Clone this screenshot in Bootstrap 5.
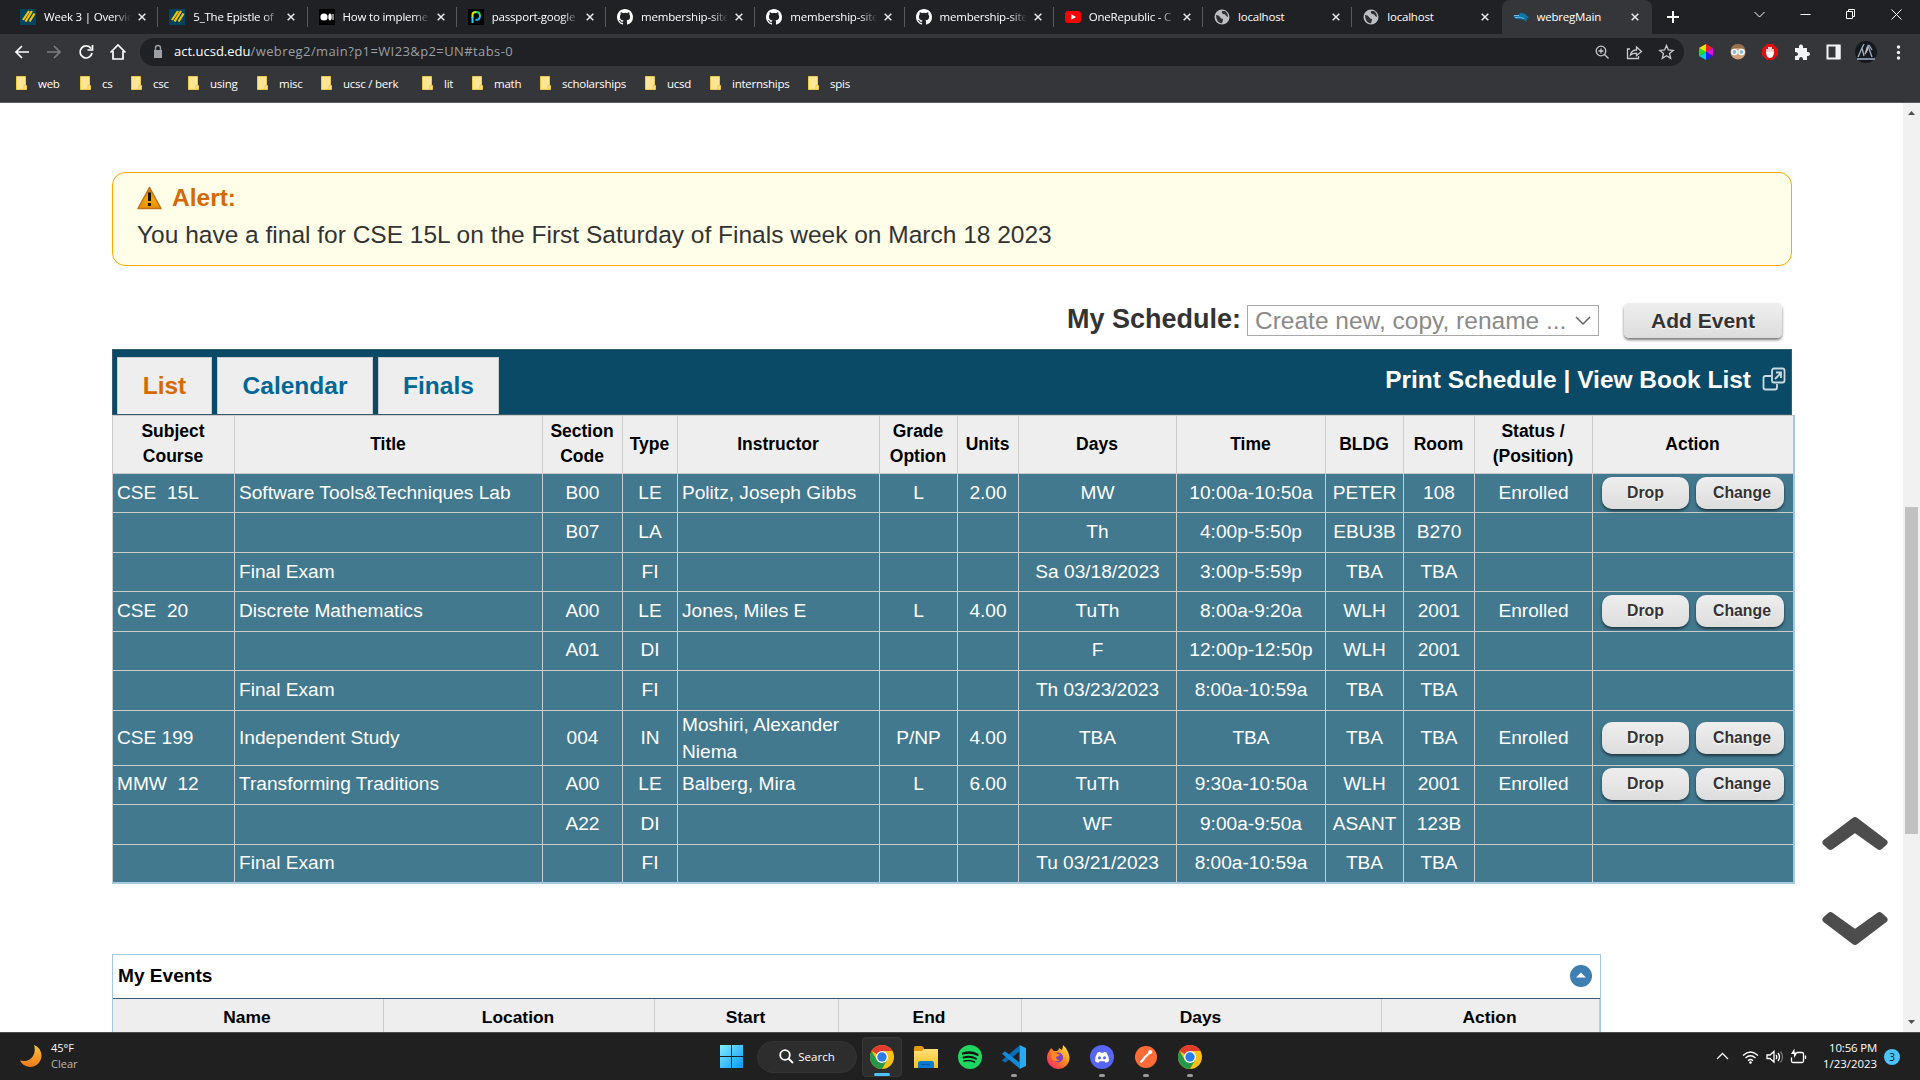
<!DOCTYPE html>
<html lang="en">
<head>
<meta charset="utf-8">
<title>webregMain</title>
<link href="https://cdn.jsdelivr.net/npm/bootstrap@5.3.0/dist/css/bootstrap.min.css" rel="stylesheet">
<style>
html,body{width:1920px;height:1080px;overflow:hidden}
body{font-family:"Liberation Sans",Arial,sans-serif;color:#000;background:#fff}
svg{display:block;flex:none}
.ui{font-family:"Open Sans","Noto Sans",sans-serif;color:#fff;font-size:11.5px}
/* browser chrome */
.tabstrip{height:34px;background:#202124;padding-left:9px}
.btab{width:149.25px;padding:2px 8px 2px 11px;position:relative}
.btab::after{content:"";position:absolute;right:0;top:7px;height:20px;width:1px;background:#5a5b5f}
.btab.nosep::after{display:none}
.btab svg.fav{width:16px;height:16px;margin-right:8px}
.btab .ttl{width:89px;overflow:hidden;white-space:nowrap;letter-spacing:-.2px}
.btab .fade-end{-webkit-mask-image:linear-gradient(90deg,#000 70px,transparent 87px);mask-image:linear-gradient(90deg,#000 70px,transparent 87px)}
.btab .x{margin-left:5px}
.btab.on{background:#35363a;border-radius:8px 8px 0 0;width:150px}
.toolbar{height:34px;background:#35363a;padding:4px 0 2px}
.omni{width:1544px;height:28px;border-radius:14px;background:#202124;font-size:13px}
.urlpath{color:#9aa0a6;letter-spacing:.4px}
.bookmarks{height:35px;background:#35363a;border-bottom:1px solid #5b5c60;display:grid;grid-template-columns:64px 51px 57px 69px 64px 101px 50px 68px 105px 65px 98px 90px;padding-left:16px;padding-bottom:3px;letter-spacing:-.25px}
.bookmarks svg{margin-right:9px}
/* page */
.viewport{height:929px;overflow:hidden}
.main{width:1903px;padding:69px 0 0 112px}
.alertbox{width:1680px;height:94px;border:1px solid #ffa800;border-radius:13px;background:#ffffe9;padding:11px 24px;font-size:24.5px;line-height:28px;color:#333}
.alertbox b{color:#d56a03;margin-left:10px}
.msg{margin-top:9px}
.tools{height:83px;width:1670px;padding-top:25px}
.lbl{font-size:27px;font-weight:700;color:#333;line-height:32px;padding-bottom:2px}
.sel{width:352px;height:31px;border:1px solid #a9a9a9;font-size:24.5px;color:#8a8a8a;padding-left:7px;line-height:29px;margin-left:6px;white-space:nowrap}
.gbtn{background:linear-gradient(#eee,#ddd);border:0;font-weight:700;color:#333;text-shadow:0 1px 2px #fff;box-shadow:0 2px 3px rgba(0,0,0,.55);white-space:nowrap}
.addev{width:158px;height:35px;border-radius:5px;font-size:21px;margin-left:25px;line-height:35px;text-align:center}
.tabbar{width:1680px;height:66px;background:#0b4a66;border:1px solid #3a5a70;padding:7px 5px 0 4px;font-size:24.5px;font-weight:700}
.ptab{height:57px;background:#eee;border:1px solid #ccc;border-bottom:0;line-height:55px;text-align:center;margin-right:5px;color:#016795}
.ptab.sel-on{color:#d56a03}
.plinks{color:#fff;height:47px}
.plinks svg{margin-left:11px}
.sched{width:1683px;table-layout:fixed;border-collapse:collapse;font-size:19.12px;line-height:27px;border:1px solid #a6c9e2;border-width:1px 2px 2px 1px}
.sched th{font-size:17.5px;line-height:25px;background:#eee;border:1px solid #ccc;text-align:center;padding:0 1px 1px 0;height:58px}
.sched td{background:#42798f;color:#fff;border:1px solid #ccc;height:39.45px;padding:0 3px 2px 3px;text-align:center;white-space:nowrap}
.sched tr.tall td{height:55px;padding-bottom:0}
.sched td:nth-child(1),.sched td:nth-child(2),.sched td:nth-child(5){text-align:left;padding-left:4px}
.sched td:nth-child(1){white-space:pre}
.sched td:nth-child(5){white-space:normal}
.acts{gap:7px;padding:1px 0 0 6px}
.sbtn{width:87px;height:32px;border-radius:10px;font-size:15.8px;line-height:32px;text-align:center}
.sbtn.chg{width:88px;padding-left:4px}
.events{width:1489px;margin-top:70px;border:1px solid #a6c9e2;border-bottom:0}
.evhead{height:44px;border-bottom:1px solid #3f5a70;padding:0 8px 2px 5px;font-size:19.1px;font-weight:700}
.evcols{display:grid;grid-template-columns:271px 271px 184px 183px 360px 1fr;font-size:17.4px;font-weight:700;text-align:center;background:#eee;line-height:37px;height:60px}
.evcols div{border-right:1px solid #ccc;padding-right:2px}
.pager{position:absolute;left:1821px;top:815px}
.sbar{width:17px;height:929px;background:#f1f1f1;position:absolute;right:0;top:103px;padding:5px 0}
.thumb{width:13px;height:327px;background:#c1c1c1;margin-top:391px}
/* taskbar */
.taskbar{height:48px;background:#202020;border-top:1px solid #4a4a4a;position:relative;z-index:2}
.wx{width:720px;padding-left:17px;line-height:16px;font-size:11px}
.wxt{padding-bottom:2px}
.wx .cond{color:#b9b9b9}
.pill{width:100px;height:32px;border-radius:16px;background:#2d2d2d;margin:0 5px 0 14px;border:1px solid #343434}
.app{width:40px;height:40px;margin-right:4px;position:relative;border-radius:4px;display:flex;align-items:center;justify-content:center}
.app.cur{background:#2d2d2d;border:1px solid #373737}
.app.run::after{content:"";position:absolute;bottom:0;left:17px;width:6px;height:3px;border-radius:2px;background:#9a9a9a}
.app.cur::after{left:11px;width:16px;background:#4cc2ff}
.clock{line-height:16px;font-size:11.4px;width:62px;margin-left:8px;padding-bottom:2px;white-space:nowrap}
.clock .tm{letter-spacing:-.15px}
.note{width:16px;height:16px;border-radius:50%;background:#4cc2ff;color:#111;font-size:10px;line-height:16px;text-align:center;margin:0 20px 0 7px}
</style>
</head>
<body>
<svg width="0" height="0" class="position-absolute">
<defs>
<linearGradient id="gw" x1="0" y1="0" x2="1" y2="1"><stop offset="0" stop-color="#7ff0ff"/><stop offset="1" stop-color="#0a95fb"/></linearGradient>
<linearGradient id="gf" x1="0" y1="0" x2="0" y2="1"><stop offset="0" stop-color="#ffe07a"/><stop offset="1" stop-color="#fdbf1e"/></linearGradient>
<linearGradient id="gff" x1="1" y1="0" x2="0" y2="1"><stop offset="0" stop-color="#fff34a"/><stop offset=".45" stop-color="#ff8a1e"/><stop offset="1" stop-color="#f0146e"/></linearGradient>
<linearGradient id="gal" x1="0" y1="0" x2="0" y2="1"><stop offset="0" stop-color="#c87414"/><stop offset=".5" stop-color="#f5a800"/><stop offset="1" stop-color="#e88c00"/></linearGradient>
<linearGradient id="gm" x1="0" y1="0" x2="0" y2="1"><stop offset="0" stop-color="#f8c53c"/><stop offset="1" stop-color="#ee7a1a"/></linearGradient>
<symbol id="ucsd" viewBox="0 0 16 16"><path fill="#04445f" d="M0 0h16v16H0z"/><path d="M3 11 9 2M5.500 12.500 12 2M9.500 12.500 14.500 4.500" stroke="#f5c400" stroke-width="2.200"/></symbol>
<symbol id="medium" viewBox="0 0 16 16"><path fill="#000" d="M0 0h16v16H0z"/><circle cx="5" cy="8" r="3.600" fill="#fff"/><ellipse cx="11" cy="8" rx="1.700" ry="3.400" fill="#fff"/><path d="M14 5v6" stroke="#fff"/></symbol>
<symbol id="passp" viewBox="0 0 16 16"><path fill="#000" d="M0 0h16v16H0z"/><path d="M4.500 9V5.500Q4.500 3 8 3" fill="none" stroke="#c5f20a" stroke-width="2"/><path d="M8 3q4 0 4 4" fill="none" stroke="#1ee070" stroke-width="2"/><path d="M12 7q0 4-4.500 4" fill="none" stroke="#18b8f2" stroke-width="2"/><path d="M4.500 8v6" stroke="#35d6e8" stroke-width="2"/></symbol>
<symbol id="gh" viewBox="0 0 16 16"><path fill="#fff" d="M8 0C3.580 0 0 3.580 0 8c0 3.540 2.290 6.530 5.470 7.590.4.070.550-.170.550-.380 0-.190-.010-.820-.010-1.490-2.010.370-2.530-.490-2.690-.940-.090-.230-.480-.940-.820-1.130-.280-.150-.680-.520-.010-.530.630-.010 1.080.580 1.230.820.720 1.210 1.870.870 2.330.660.070-.520.280-.870.510-1.070-1.780-.2-3.640-.890-3.640-3.950 0-.870.310-1.590.820-2.150-.080-.2-.360-1.020.080-2.120 0 0 .670-.210 2.200.820a7.600 7.600 0 0 1 4 0c1.530-1.040 2.200-.820 2.200-.820.440 1.100.160 1.920.080 2.120.510.560.820 1.270.820 2.150 0 3.070-1.870 3.750-3.650 3.950.290.250.540.730.540 1.480 0 1.070-.010 1.930-.010 2.200 0 .210.150.460.550.380A8 8 0 0 0 16 8c0-4.420-3.580-8-8-8z"/></symbol>
<symbol id="yt" viewBox="0 0 16 16"><rect y="2" width="16" height="12" rx="3" fill="#f00"/><path d="M6.300 5.300v5.400L11 8z" fill="#fff"/></symbol>
<symbol id="globe" viewBox="0 0 16 16"><circle cx="8" cy="8" r="7.500" fill="#bdbfc2"/><path d="M2 6q3 0 4 2t3 2q0 3-1.500 4.500Q2 13 2 6M8 2q-1 2 1 3 3 0 3 2l2 1q0-4-3-6z" fill="#303134"/></symbol>
<symbol id="shark" viewBox="0 0 16 16"><path d="M1 6h4l3-2.500L12 5l4 3.500-2 1-1 3.500-2.500-2.500L3 10 0 7.500z" fill="#0b76a8"/><path d="M1 6.500h5M2 8.500q6-1 9 1" stroke="#7fb8d6" fill="none"/></symbol>
<symbol id="cls" viewBox="0 0 8 8"><path d="m.7.7 6.600 6.600m0-6.600L.7 7.300" stroke="#e8eaed" stroke-width="1.500"/></symbol>
<symbol id="fold" viewBox="0 0 13 15"><path d="M.5.500h9v13h-9z" fill="#ffe594" stroke="#eec84b"/><path d="M8 13.500v-4h2.500v4z" fill="#ffe594" stroke="#eec84b"/></symbol>
<symbol id="chrome" viewBox="0 0 24 24"><circle cx="12" cy="12" r="12" fill="#fbc116"/><path d="M12 12 1.600 6A12 12 0 0 1 22.400 6H12z" fill="#e33b2e"/><path d="M1.600 6A12 12 0 0 0 12 24l5.200-9L12 12 6.800 15z" fill="#279847"/><circle cx="12" cy="12" r="6" fill="#fff"/><circle cx="12" cy="12" r="4.700" fill="#2a7de9"/></symbol>
</defs></svg>

<header class="ui">
<div class="tabstrip d-flex">
<div class="btab d-flex align-items-center"><svg class="fav"><use href="#ucsd"/></svg><span class="ttl fade-end">Week 3 | Overvie</span><svg class="x" width="8" height="8"><use href="#cls"/></svg></div>
<div class="btab d-flex align-items-center"><svg class="fav"><use href="#ucsd"/></svg><span class="ttl fade-end">5_The Epistle of</span><svg class="x" width="8" height="8"><use href="#cls"/></svg></div>
<div class="btab d-flex align-items-center"><svg class="fav"><use href="#medium"/></svg><span class="ttl fade-end">How to impleme</span><svg class="x" width="8" height="8"><use href="#cls"/></svg></div>
<div class="btab d-flex align-items-center"><svg class="fav"><use href="#passp"/></svg><span class="ttl fade-end">passport-google</span><svg class="x" width="8" height="8"><use href="#cls"/></svg></div>
<div class="btab d-flex align-items-center"><svg class="fav"><use href="#gh"/></svg><span class="ttl fade-end">membership-site</span><svg class="x" width="8" height="8"><use href="#cls"/></svg></div>
<div class="btab d-flex align-items-center"><svg class="fav"><use href="#gh"/></svg><span class="ttl fade-end">membership-site</span><svg class="x" width="8" height="8"><use href="#cls"/></svg></div>
<div class="btab d-flex align-items-center"><svg class="fav"><use href="#gh"/></svg><span class="ttl fade-end">membership-site</span><svg class="x" width="8" height="8"><use href="#cls"/></svg></div>
<div class="btab d-flex align-items-center"><svg class="fav"><use href="#yt"/></svg><span class="ttl fade-end">OneRepublic - C</span><svg class="x" width="8" height="8"><use href="#cls"/></svg></div>
<div class="btab d-flex align-items-center"><svg class="fav"><use href="#globe"/></svg><span class="ttl">localhost</span><svg class="x" width="8" height="8"><use href="#cls"/></svg></div>
<div class="btab nosep d-flex align-items-center"><svg class="fav"><use href="#globe"/></svg><span class="ttl">localhost</span><svg class="x" width="8" height="8"><use href="#cls"/></svg></div>
<div class="btab on nosep d-flex align-items-center"><svg class="fav"><use href="#shark"/></svg><span class="ttl">webregMain</span><svg class="x" width="8" height="8"><use href="#cls"/></svg></div>
<svg width="268" height="34" viewBox="0 0 268 34" fill="none" stroke="#fff"><path d="M15 17h12m-6-6v12" stroke-width="2"/><path d="m102.500 12 5 5 5-5M148.500 14.500h10M194.500 11.500h6v7h-6zM196.500 11v-1.500h6v7h-2M239.500 9.500l10 10m0-10-10 10"/></svg>
</div>
<div class="toolbar d-flex align-items-center">
<svg width="140" height="28" viewBox="0 0 140 28" fill="none" stroke="#fff" stroke-width="1.700"><path d="M29 14H16m6-6-6 6 6 6"/><path d="M47 14h13m-6-6 6 6-6 6" stroke="#7c7d80"/><path d="M91 10.500a6 6 0 1 0 1 4.500M92.500 7v5h-5"/><path d="M110.500 14.500 118 7l7.500 7.500M113 13v8h10v-8"/></svg>
<div class="omni d-flex align-items-center">
<svg width="34" height="28" viewBox="0 0 34 28"><path d="M14 12h8v8h-8z" fill="#9aa0a6"/><path d="M15.500 12v-2a2.500 2.500 0 0 1 5 0v2" fill="none" stroke="#9aa0a6" stroke-width="1.400"/></svg>
<span class="flex-grow-1 pt-1 pb-1">act.ucsd.edu<span class="urlpath">/webreg2/main?p1=WI23&amp;p2=UN#tabs-0</span></span>
<svg width="97" height="28" viewBox="0 0 97 28" fill="none" stroke="#c8cacd" stroke-width="1.300"><circle cx="14" cy="13" r="4.800"/><path d="m17.500 16.500 4 4M14 10.500v5M11.500 13h5M43 11h-2.500v9.500h11V18M43.500 17q1-5 6-5V9l5 4.500-5 4.200v-2.500q-4 0-6 1.800z"/><path d="m79.500 7.500 1.900 4.500 4.800.4-3.700 3.100 1.200 4.800-4.200-2.600-4.200 2.600 1.200-4.800-3.700-3.100 4.800-.4z"/></svg>
</div>
<svg width="236" height="28" viewBox="0 0 236 28"><g transform="translate(22 14)"><path d="M0 0 0-8 7-4z" fill="#f02020"/><path d="M0 0 7-4 7 4z" fill="#e010e0"/><path d="M0 0 7 4 0 8z" fill="#2020f0"/><path d="M0 0 0 8-7 4z" fill="#10c8e0"/><path d="M0 0-7 4-7-4z" fill="#20e020"/><path d="M0 0-7-4 0-8z" fill="#f0e010"/></g>
<circle cx="54" cy="14" r="7.500" fill="#d0a07c"/><path d="M46.800 11.500a7.500 7.500 0 0 1 14.400 0q-7-3-14.400 0z" fill="#96724f"/><circle cx="50.500" cy="14" r="2.600" fill="#7fc0dc" stroke="#fff" stroke-width="1.300"/><circle cx="57.500" cy="14" r="2.600" fill="#7fc0dc" stroke="#fff" stroke-width="1.300"/>
<path d="M83 6h6l5 5v6l-5 5h-6l-5-5v-6z" fill="#e01010"/><path d="M83 15v-4m2 3V9m2 5V9m2 6v-4" stroke="#fff" stroke-width="1.600"/><path d="M82.200 14h7.600v2q-1 4-3.800 4t-3.800-4z" fill="#fff"/>
<path d="M111 10h4q-.5-3.500 2-3.500T119 10h4v4q3-.5 3 2t-3 2v4h-4q0-3-2-3t-2 3h-4v-4q3 0 3-2t-3-2z" fill="#f1f3f4"/>
<path d="M143.500 7.500h12v13h-12z" fill="none" stroke="#f1f3f4" stroke-width="2"/><path d="M151.500 7h5v14h-5z" fill="#f1f3f4"/>
<circle cx="182" cy="14" r="11" fill="#15181f"/><path d="m174 19 4-9 2 8m1-2 3-8 4 11m-8-13-2 4m7-3 3 5M173 21h18" stroke="#9fb0c8" fill="none" stroke-width="1.300"/><path d="m183 8 1 4-3 5z" fill="#d8c8b4"/>
<g fill="#f1f3f4"><circle cx="214.500" cy="9" r="1.700"/><circle cx="214.500" cy="14.500" r="1.700"/><circle cx="214.500" cy="20" r="1.700"/></g></svg>
</div>
<div class="bookmarks align-items-center">
<div class="d-flex align-items-center"><svg width="13" height="15"><use href="#fold"/></svg>web</div>
<div class="d-flex align-items-center"><svg width="13" height="15"><use href="#fold"/></svg>cs</div>
<div class="d-flex align-items-center"><svg width="13" height="15"><use href="#fold"/></svg>csc</div>
<div class="d-flex align-items-center"><svg width="13" height="15"><use href="#fold"/></svg>using</div>
<div class="d-flex align-items-center"><svg width="13" height="15"><use href="#fold"/></svg>misc</div>
<div class="d-flex align-items-center"><svg width="13" height="15"><use href="#fold"/></svg>ucsc / berk</div>
<div class="d-flex align-items-center"><svg width="13" height="15"><use href="#fold"/></svg>lit</div>
<div class="d-flex align-items-center"><svg width="13" height="15"><use href="#fold"/></svg>math</div>
<div class="d-flex align-items-center"><svg width="13" height="15"><use href="#fold"/></svg>scholarships</div>
<div class="d-flex align-items-center"><svg width="13" height="15"><use href="#fold"/></svg>ucsd</div>
<div class="d-flex align-items-center"><svg width="13" height="15"><use href="#fold"/></svg>internships</div>
<div class="d-flex align-items-center"><svg width="13" height="15"><use href="#fold"/></svg>spis</div>
</div>
</header>

<div class="viewport">
<main class="main">
<div class="alertbox">
<div class="d-flex align-items-center"><svg width="25" height="24" viewBox="0 0 25 24"><path d="M12.500 1.500 24 22.500H1z" fill="url(#gal)" stroke="#c0701a" stroke-width="1.500" stroke-linejoin="round"/><path d="M12.500 6.500v8.500m0 2v3" stroke="#111" stroke-width="3"/></svg><b>Alert:</b></div>
<div class="msg"><span>You have a final for CSE 15L on the First Saturday of Finals week on March 18 2023</span></div>
</div>
<div class="tools d-flex align-items-center justify-content-end">
<span class="lbl">My Schedule:</span>
<div class="sel d-flex justify-content-between"><span>Create new, copy, rename ...</span><svg width="29" height="29" viewBox="0 0 29 29" fill="none" stroke="#666" stroke-width="1.500"><path d="m7 11 7 7 7-7"/></svg></div>
<div class="gbtn addev">Add Event</div>
</div>
<div class="tabbar d-flex">
<div class="ptab sel-on" style="width:95px">List</div>
<div class="ptab" style="width:156px">Calendar</div>
<div class="ptab" style="width:121px">Finals</div>
<div class="plinks ms-auto d-flex align-items-center"><span>Print Schedule | View Book List</span><svg width="24" height="24" viewBox="0 0 24 24" fill="none" stroke="#c9dbe4" stroke-width="1.800" class="mb-1"><rect x="10" y="1.500" width="12.500" height="14" rx="2"/><path d="M9 9H3.500Q1.500 9 1.500 11v9.500q0 2 2 2H13q2 0 2-2V17M13 12l6-6M14 5.500h5V11"/></svg></div>
</div>
<table class="sched">
<colgroup><col style="width:122px"><col style="width:308px"><col style="width:80px"><col style="width:55px"><col style="width:202px"><col style="width:78px"><col style="width:61px"><col style="width:158px"><col style="width:149px"><col style="width:78px"><col style="width:71px"><col style="width:118px"><col></colgroup>
<thead><tr><th>Subject<br>Course</th><th>Title</th><th>Section<br>Code</th><th>Type</th><th>Instructor</th><th>Grade<br>Option</th><th>Units</th><th>Days</th><th>Time</th><th>BLDG</th><th>Room</th><th>Status /<br>(Position)</th><th>Action</th></tr></thead>
<tbody id="rows"></tbody>
</table>
<div class="events">
<div class="evhead d-flex align-items-center justify-content-between"><span>My Events</span><svg width="22" height="22" viewBox="0 0 22 22"><circle cx="11" cy="11" r="11" fill="#3f7eb1"/><path d="M6 12.500 11 7.500l5 5z" fill="#fff"/></svg></div>
<div class="evcols"><div>Name</div><div>Location</div><div>Start</div><div>End</div><div>Days</div><div>Action</div></div>
</div>
</main>
</div>
<svg class="pager" width="68" height="132" viewBox="0 0 68 132" fill="#4d4d4d" stroke="#4d4d4d" stroke-width="7" stroke-linejoin="round"><path d="M34 5.500 63 27.500 58.500 31.500 34 14 9.500 31.500 5 27.500zM34 126.500 63 104.500 58.500 100.500 34 118 9.500 100.500 5 104.500z"/></svg>
<div class="sbar d-flex flex-column align-items-center"><svg width="9" height="8"><path d="M1 7h7L4.500 3z" fill="#505050"/></svg><div class="thumb"></div><svg width="9" height="8" class="mt-auto"><path d="M1 1h7L4.500 5z" fill="#505050"/></svg></div>

<footer class="taskbar ui d-flex align-items-center">
<div class="wx d-flex align-items-center"><svg width="26" height="28" viewBox="0 0 26 28"><path d="M17 2a11.300 11.300 0 1 1-14 15.500q9 2 13-4.500 3-5 1-11" fill="url(#gm)"/></svg><div class="wxt ms-2">45°F<br><span class="cond">Clear</span></div></div>
<svg width="23" height="23" viewBox="0 0 23 23"><path d="M0 0h11v11H0zM12 0h11v11H12zM0 12h11v11H0zM12 12h11v11H12z" fill="url(#gw)"/></svg>
<div class="pill d-flex align-items-center justify-content-center"><svg width="15" height="15" viewBox="0 0 15 15" fill="none" stroke="#fff" stroke-width="1.800" class="me-1"><circle cx="6" cy="6" r="4.800"/><path d="m9.500 9.500 4.500 4.500"/></svg>Search</div>
<div class="app cur run"><svg width="24" height="24"><use href="#chrome"/></svg></div>
<div class="app"><svg width="24" height="22" viewBox="0 0 24 22"><path d="M0 1.500Q0 0 1.500 0H8l2 2v6H0z" fill="#e29a00"/><path d="M0 5h8l2-2h14v19H0z" fill="url(#gf)"/><path d="M4 22v-4.500q0-2.500 2.500-2.500h11q2.500 0 2.500 2.500V22z" fill="#0a7ad0"/><path d="M7 18.500h9" stroke="#085a9e"/></svg></div>
<div class="app"><svg width="24" height="24" viewBox="0 0 24 24" fill="none" stroke="#111" stroke-linecap="round"><circle cx="12" cy="12" r="12" fill="#1ed760" stroke="none"/><path d="M5 8.500q8-2.500 14.500 1.300" stroke-width="2.300"/><path d="M5.500 12.500q7-2 12.500 1.200" stroke-width="1.900"/><path d="M6 16q6-1.500 10.500 1" stroke-width="1.600"/></svg></div>
<div class="app run"><svg width="24" height="24" viewBox="0 0 24 24"><path d="M17.500.500v6L3 17.800 0 15.300z" fill="#0a6cb5"/><path d="M17.500 23.500v-6L3 6.200 0 8.700z" fill="#138ad6"/><path d="M17.500 0 24 3v18l-6.500 3z" fill="#2aa9f3"/></svg></div>
<div class="app"><svg width="24" height="24" viewBox="0 0 24 24"><path d="M1 13Q1 8 4 5l1-2 3 3h3q2-1 2-3l3 2q1-3 1-5 4 3 5 7 1.500 3 1.500 6A11.200 11 0 0 1 1 13" fill="url(#gff)"/><circle cx="12" cy="12.500" r="5" fill="#7a3fd0"/><path d="M5 8q4-2 7 1l2 1q-2 2-4 2 0 3 4 3-5 3-8-1z" fill="#ff8a1e"/></svg></div>
<div class="app run"><svg width="24" height="24" viewBox="0 0 24 24"><circle cx="12" cy="12" r="12" fill="#5865f2"/><path d="M7.500 7.500 10 6.800l.6 1h2.800l.6-1 2.500.7q2.500 4 2.500 8.500-1.500 1.500-3.500 1.800l-1-1.600h-5l-1 1.600Q6.500 17.500 5 16q0-4.500 2.500-8.500" fill="#fff"/><circle cx="9.500" cy="12.800" r="1.500" fill="#5865f2"/><circle cx="14.500" cy="12.800" r="1.500" fill="#5865f2"/></svg></div>
<div class="app run"><svg width="24" height="24" viewBox="0 0 24 24"><circle cx="12" cy="12" r="11" fill="#ff6c37"/><path d="m10 13 6-5.500M6.500 17.500 10.500 13" stroke="#fff" stroke-width="2.200"/><circle cx="16.300" cy="7" r="2" fill="#fff"/></svg></div>
<div class="app run"><svg width="24" height="24"><use href="#chrome"/></svg></div>
<svg class="ms-auto" width="92" height="24" viewBox="0 0 92 24" fill="none" stroke="#fff" stroke-width="1.300"><path d="m2 14 5.500-5.500L13 14"/><path d="M28 10.500q7.500-7 15 0M30.500 13q5-4.500 10 0M33 15.700q2.500-2.500 5 0"/><circle cx="35.500" cy="17.500" r="1.300" fill="#fff" stroke="none"/><path d="M52 10h3l4-3.500v10.500L55 13.500h-3zM61 10q1.500 2 0 4M63 8q3 4 0 8"/><path d="M65.500 6.500q4 5.500 0 11" stroke="#777"/><path d="M81.500 7.500H87q1.500 0 1.500 1.500v7q0 1.500-1.500 1.500H78q-1.500 0-1.500-1.500v-3.500M90.500 10.500v3.500"/><path d="M79.500 3.500 76 9h3v4l3.500-5.500h-3z" fill="#fff" stroke="none"/></svg>
<div class="clock text-end"><span class="tm">10:56 PM</span><br>1/23/2023</div>
<div class="note">3</div>
</footer>
<script>
const B='<div class="acts d-flex"><div class="gbtn sbtn">Drop</div><div class="gbtn sbtn chg">Change</div></div>';
const rows=[
['CSE  15L','Software Tools&amp;Techniques Lab','B00','LE','Politz, Joseph Gibbs','L','2.00','MW','10:00a-10:50a','PETER','108','Enrolled',B],
['','','B07','LA','','','','Th','4:00p-5:50p','EBU3B','B270','',''],
['','Final Exam','','FI','','','','Sa 03/18/2023','3:00p-5:59p','TBA','TBA','',''],
['CSE  20','Discrete Mathematics','A00','LE','Jones, Miles E','L','4.00','TuTh','8:00a-9:20a','WLH','2001','Enrolled',B],
['','','A01','DI','','','','F','12:00p-12:50p','WLH','2001','',''],
['','Final Exam','','FI','','','','Th 03/23/2023','8:00a-10:59a','TBA','TBA','',''],
['CSE 199','Independent Study','004','IN','Moshiri, Alexander Niema','P/NP','4.00','TBA','TBA','TBA','TBA','Enrolled',B],
['MMW  12','Transforming Traditions','A00','LE','Balberg, Mira','L','6.00','TuTh','9:30a-10:50a','WLH','2001','Enrolled',B],
['','','A22','DI','','','','WF','9:00a-9:50a','ASANT','123B','',''],
['','Final Exam','','FI','','','','Tu 03/21/2023','8:00a-10:59a','TBA','TBA','','']];
document.getElementById('rows').innerHTML=rows.map((r,i)=>'<tr'+(i==6?' class="tall"':'')+'>'+r.map(c=>'<td>'+c+'</td>').join('')+'</tr>').join('');
</script>
<script src="https://cdn.jsdelivr.net/npm/bootstrap@5.3.0/dist/js/bootstrap.bundle.min.js"></script>
</body>
</html>
